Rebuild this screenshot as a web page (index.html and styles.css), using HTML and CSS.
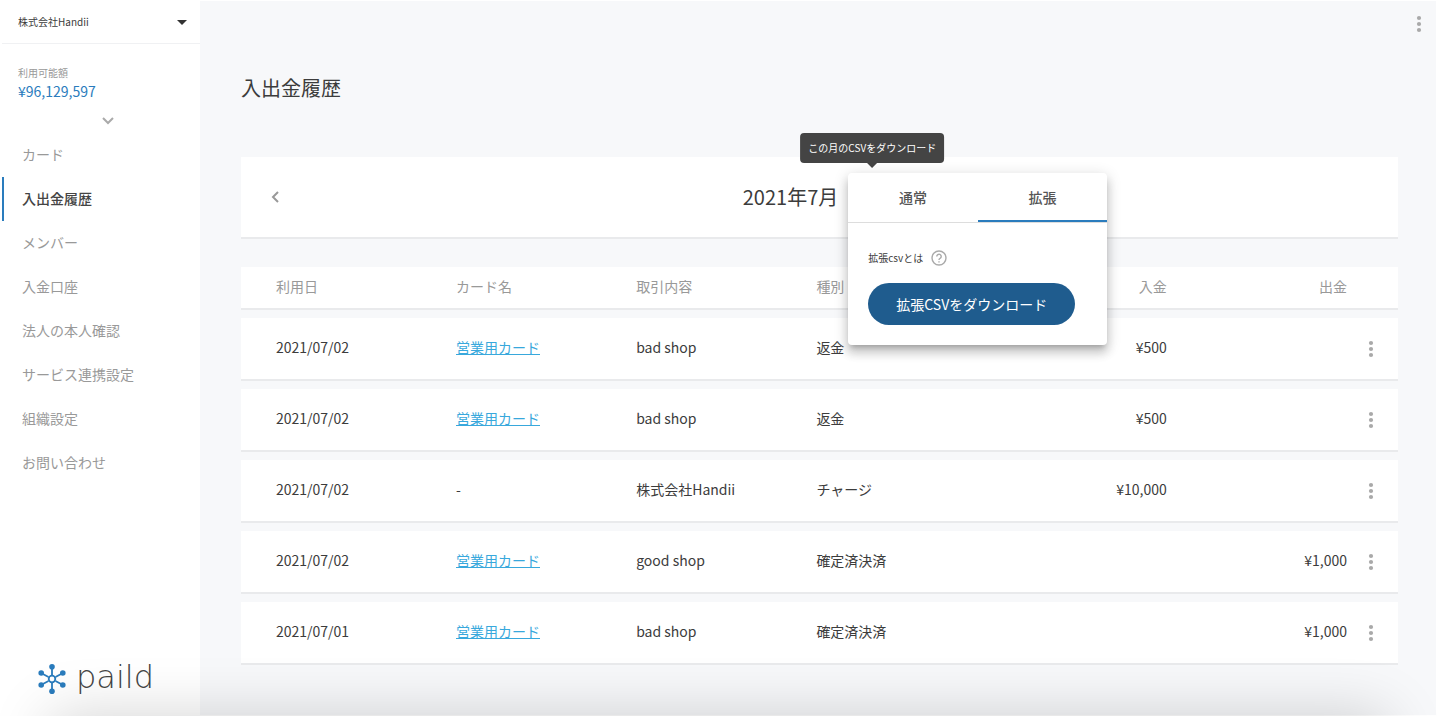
FILE: index.html
```html
<!DOCTYPE html>
<html lang="ja">
<head>
    <meta charset="UTF-8">
    <meta name="viewport" content="width=device-width, initial-scale=1.0">
    <title>入出金履歴 - paild</title>
    <link rel="stylesheet" href="styles.css">
</head>
<body>
    <!-- Shared icons -->
    <svg class="icon-defs" aria-hidden="true">
        <symbol id="icon-more" viewBox="0 0 24 24">
            <circle cx="12" cy="6" r="2.1"/>
            <circle cx="12" cy="12" r="2.1"/>
            <circle cx="12" cy="18" r="2.1"/>
        </symbol>
    </svg>

    <div class="layout">
        <!-- Sidebar -->
        <aside class="sidebar">
            <div class="company">
                <select class="company-select" aria-label="会社">
                    <option>株式会社Handii</option>
                </select>
                <svg class="company-caret" viewBox="0 0 10 5" aria-hidden="true"><path d="M0 0h10L5 5z"/></svg>
            </div>

            <div class="balance">
                <div class="balance-label">利用可能額</div>
                <div class="balance-amount">¥96,129,597</div>
                <button type="button" class="balance-toggle" aria-label="詳細を開く">
                    <svg viewBox="0 0 12 8" aria-hidden="true"><path d="M1 1l5 5 5-5"/></svg>
                </button>
            </div>

            <nav class="menu">
                <a href="#" class="menu-item">カード</a>
                <a href="#" class="menu-item active">入出金履歴</a>
                <a href="#" class="menu-item">メンバー</a>
                <a href="#" class="menu-item">入金口座</a>
                <a href="#" class="menu-item">法人の本人確認</a>
                <a href="#" class="menu-item">サービス連携設定</a>
                <a href="#" class="menu-item">組織設定</a>
                <a href="#" class="menu-item">お問い合わせ</a>
            </nav>

            <a href="#" class="logo">
                <svg class="logo-mark" viewBox="0 0 28 30" aria-hidden="true">
                    <g class="logo-lines">
                        <path d="M14 11V3M14 19v8M10.500 13L3 9M17.500 13L25 9M10.500 17L3 21M17.500 17L25 21"/>
                        <circle cx="14" cy="15" r="3.300"/>
                    </g>
                    <circle cx="14" cy="2.800" r="2.800"/>
                    <circle cx="14" cy="27.200" r="2.800"/>
                    <circle cx="3.200" cy="9" r="2.800"/>
                    <circle cx="24.800" cy="9" r="2.800"/>
                    <circle cx="3.200" cy="21" r="2.800"/>
                    <circle cx="24.800" cy="21" r="2.800"/>
                </svg>
                <span class="logo-text">paild</span>
            </a>
        </aside>

        <!-- Main -->
        <main class="main">
            <div class="topbar">
                <button type="button" class="more-button" aria-label="メニュー"><svg><use href="#icon-more"/></svg></button>
            </div>

            <div class="content">
                <h1 class="page-title">入出金履歴</h1>

                <section class="month-card">
                    <button type="button" class="prev-button" aria-label="前の月">
                        <svg viewBox="0 0 8 12" aria-hidden="true"><path d="M7 1L2 6l5 5"/></svg>
                    </button>
                    <div class="month">
                        <span class="month-label">2021年7月</span>
                        <div class="download">
                            <button type="button" class="download-button" aria-label="この月のCSVをダウンロード">
                                <svg viewBox="0 0 24 24" aria-hidden="true"><path d="M19 9h-4V3H9v6H5l7 7zM5 18v2h14v-2z"/></svg>
                            </button>
                            <div class="tooltip" role="tooltip">この月のCSVをダウンロード</div>
                            <div class="popover">
                                <div class="tabs" role="tablist">
                                    <button type="button" class="tab" role="tab" aria-selected="false">通常</button>
                                    <button type="button" class="tab selected" role="tab" aria-selected="true">拡張</button>
                                </div>
                                <div class="popover-body">
                                    <div class="hint">
                                        <span>拡張csvとは</span>
                                        <svg class="hint-icon" viewBox="0 0 16 16" aria-hidden="true">
                                            <circle cx="8" cy="8" r="7"/>
                                            <path d="M5.800 6.500a2.200 2.200 0 1 1 3.600 1.600C8.600 8.700 8 9 8 10"/>
                                            <path d="M8 11.200v1.300"/>
                                        </svg>
                                    </div>
                                    <button type="button" class="csv-button">拡張CSVをダウンロード</button>
                                </div>
                            </div>
                        </div>
                    </div>
                </section>

                <table class="history">
                    <colgroup>
                        <col class="col-date">
                        <col span="5">
                        <col class="col-more">
                    </colgroup>
                    <thead>
                        <tr>
                            <th>利用日</th>
                            <th>カード名</th>
                            <th>取引内容</th>
                            <th>種別</th>
                            <th class="amount">入金</th>
                            <th class="amount">出金</th>
                            <th></th>
                        </tr>
                    </thead>
                    <tbody>
                        <tr>
                            <td>2021/07/02</td>
                            <td><a href="#">営業用カード</a></td>
                            <td>bad shop</td>
                            <td>返金</td>
                            <td class="amount">¥500</td>
                            <td class="amount"></td>
                            <td class="action"><button type="button" class="more-button" aria-label="操作"><svg><use href="#icon-more"/></svg></button></td>
                        </tr>
                        <tr>
                            <td>2021/07/02</td>
                            <td><a href="#">営業用カード</a></td>
                            <td>bad shop</td>
                            <td>返金</td>
                            <td class="amount">¥500</td>
                            <td class="amount"></td>
                            <td class="action"><button type="button" class="more-button" aria-label="操作"><svg><use href="#icon-more"/></svg></button></td>
                        </tr>
                        <tr>
                            <td>2021/07/02</td>
                            <td>-</td>
                            <td>株式会社Handii</td>
                            <td>チャージ</td>
                            <td class="amount">¥10,000</td>
                            <td class="amount"></td>
                            <td class="action"><button type="button" class="more-button" aria-label="操作"><svg><use href="#icon-more"/></svg></button></td>
                        </tr>
                        <tr>
                            <td>2021/07/02</td>
                            <td><a href="#">営業用カード</a></td>
                            <td>good shop</td>
                            <td>確定済決済</td>
                            <td class="amount"></td>
                            <td class="amount">¥1,000</td>
                            <td class="action"><button type="button" class="more-button" aria-label="操作"><svg><use href="#icon-more"/></svg></button></td>
                        </tr>
                        <tr>
                            <td>2021/07/01</td>
                            <td><a href="#">営業用カード</a></td>
                            <td>bad shop</td>
                            <td>確定済決済</td>
                            <td class="amount"></td>
                            <td class="amount">¥1,000</td>
                            <td class="action"><button type="button" class="more-button" aria-label="操作"><svg><use href="#icon-more"/></svg></button></td>
                        </tr>
                    </tbody>
                </table>
            </div>
        </main>
    </div>

    <div class="bottom-shadow"></div>
</body>
</html>
```
FILE: styles.css
```css
/* General Styles */
* {
    box-sizing: border-box;
}

body {
    margin: 0;
    background-color: #fff;
    color: #3c3c3c;
    font-family: "Noto Sans CJK JP", sans-serif;
    font-size: 14px;
    line-height: 20px;
}

button {
    padding: 0;
    border: none;
    background: none;
    color: inherit;
    font: inherit;
    cursor: pointer;
}

svg {
    display: block;
}

.icon-defs {
    position: absolute;
    width: 0;
    height: 0;
}

.layout {
    display: flex;
    min-height: 100vh;
    border: 1px solid #fff;
    border-left: none;
}

/* Sidebar */
.sidebar {
    display: flex;
    flex-direction: column;
    flex: 0 0 200px;
    border-left: 2px solid #fff;
    background-color: #fff;
}

.company {
    position: relative;
    border-bottom: 1px solid #f0f1f3;
}

.company-select {
    display: block;
    width: 100%;
    height: 42px;
    padding: 0 32px 2px 16px;
    border: none;
    background: none;
    color: #3c3c3c;
    font-family: inherit;
    font-size: 10px;
    appearance: none;
}

.company-caret {
    position: absolute;
    top: 19px;
    right: 13px;
    width: 10px;
    height: 5px;
    fill: #333;
    pointer-events: none;
}

.balance {
    padding: 21px 16px 8px;
}

.balance-label {
    color: #999;
    font-size: 10px;
    line-height: 16px;
}

.balance-amount {
    color: #2a7cbd;
}

.balance-toggle {
    display: block;
    margin: 16px auto 0;
    padding: 0 0 0 14px;
}

.balance-toggle svg {
    width: 12px;
    height: 8px;
    fill: none;
    stroke: #aaa;
    stroke-width: 2;
}

.menu-item {
    display: block;
    padding: 11px 0 13px 18px;
    border-left: 2px solid transparent;
    color: #999;
    text-decoration: none;
}

.menu-item.active {
    border-color: #2a7cbd;
    color: #444;
    font-weight: 500;
}

.logo {
    display: flex;
    align-items: center;
    gap: 10px;
    margin-top: auto;
    padding: 0 0 21px 36px;
    color: #444;
    text-decoration: none;
}

.logo-mark {
    width: 28px;
    height: 30px;
    fill: #2a7cbd;
}

.logo-lines {
    fill: none;
    stroke: #2a7cbd;
    stroke-width: 1.8;
}

.logo-text {
    padding-bottom: 4px;
    font-family: "DejaVu Sans", sans-serif;
    font-size: 32px;
    font-weight: 200;
    line-height: 26px;
}

/* Main */
.main {
    flex: 1;
    min-width: 0;
    background-color: #f7f8fa;
}

.topbar {
    display: flex;
    justify-content: flex-end;
    padding: 11px 5px 0 0;
}

.more-button {
    display: block;
}

.more-button svg {
    width: 24px;
    height: 24px;
    fill: #a9a9a9;
}

.content {
    padding: 37px 38px 42px 41px;
}

.page-title {
    margin: 0 0 54px;
    font-size: 20px;
    font-weight: 400;
    line-height: 30px;
}

/* Month card */
.month-card {
    display: grid;
    grid-template-columns: 1fr auto 1fr;
    align-items: center;
    height: 82px;
    margin-bottom: 20px;
    padding: 0 30px;
    border-bottom: 2px solid #e9eaec;
    background-color: #fff;
}

.prev-button {
    justify-self: start;
}

.prev-button svg {
    width: 8px;
    height: 12px;
    fill: none;
    stroke: #999;
    stroke-width: 2;
}

.month {
    display: flex;
    align-items: center;
    gap: 10px;
}

.month-label {
    font-size: 20px;
    line-height: 30px;
}

.download {
    position: relative;
}

.download-button {
    display: block;
    padding: 12px;
}

.download-button svg {
    width: 24px;
    height: 24px;
    fill: #999;
}

.tooltip {
    position: absolute;
    bottom: calc(100% + 10px);
    left: 50%;
    padding: 5px 8px;
    border-radius: 4px;
    background-color: #444;
    color: #fff;
    font-size: 10px;
    white-space: nowrap;
    transform: translateX(-50%);
}

.tooltip::after {
    content: "";
    position: absolute;
    top: 100%;
    left: 50%;
    margin-left: -5px;
    border: 5px solid transparent;
    border-top-color: #444;
    border-bottom: none;
}

.popover {
    position: absolute;
    top: 0;
    left: 0;
    z-index: 10;
    width: 259px;
    border-radius: 4px;
    background-color: #fff;
    box-shadow: 0 5px 5px -3px rgba(0, 0, 0, 0.2), 0 8px 10px 1px rgba(0, 0, 0, 0.14), 0 3px 14px 2px rgba(0, 0, 0, 0.12);
}

.tabs {
    display: flex;
    height: 50px;
    border-bottom: 1px solid #ddd;
}

.tab {
    flex: 1;
    border-bottom: 2px solid transparent;
    color: #555;
    font-weight: 500;
}

.tab.selected {
    border-color: #2a7cbd;
}

.popover-body {
    padding: 25px 20px 20px;
}

.hint {
    display: flex;
    align-items: center;
    gap: 8px;
    margin-bottom: 15px;
    font-size: 10px;
}

.hint-icon {
    width: 16px;
    height: 16px;
    fill: none;
    stroke: #aaa;
    stroke-width: 1.4;
}

.csv-button {
    display: block;
    height: 42px;
    padding: 0 28px;
    border-radius: 21px;
    background-color: #1f5c8e;
    color: #fff;
    white-space: nowrap;
}

/* History table */
.history {
    width: 100%;
    border-spacing: 0 8px;
    table-layout: fixed;
}

.col-date {
    width: 205px;
}

.col-more {
    width: 51px;
}

.history th,
.history td {
    padding: 0 0 4px 10px;
    border-bottom: 2px solid #e9eaec;
    background-color: #fff;
    text-align: left;
}

.history th {
    height: 43px;
    color: #999;
    font-weight: 400;
}

.history td {
    height: 63px;
}

.history th:first-child,
.history td:first-child {
    padding-left: 35px;
}

.history .amount {
    padding-left: 0;
    text-align: right;
}

.history .action {
    padding: 0 0 0 12px;
}

.history a {
    color: #38a8dc;
}

/* Soft shadow along the bottom edge of the window */
.bottom-shadow {
    position: fixed;
    right: 50px;
    bottom: -60px;
    left: 50px;
    height: 60px;
    box-shadow: 0 0 60px rgba(0, 0, 0, 0.18);
    pointer-events: none;
}
```
